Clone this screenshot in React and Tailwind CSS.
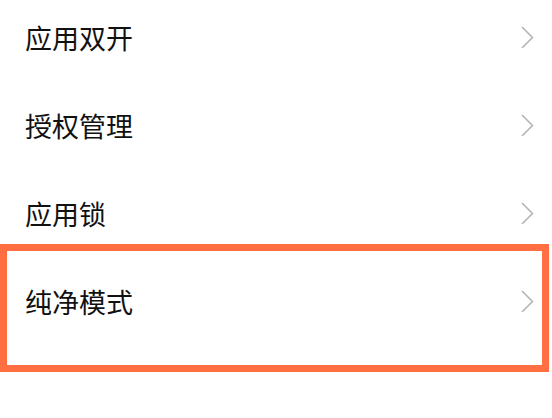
import React from 'react';

const items = ['应用双开', '授权管理', '应用锁', '纯净模式'];

const Chevron = () => (
  <svg width="13" height="23" viewBox="0 0 13 23" fill="none">
    <polyline
      points="1.5,1.5 11.5,11.5 1.5,21.5"
      stroke="#b4b4b4"
      strokeWidth="1.6"
      strokeLinecap="round"
      strokeLinejoin="round"
    />
  </svg>
);

export default function App() {
  return (
    <div
      className="relative w-[552px] h-[418px] bg-white overflow-hidden"
      style={{ fontFamily: '"Noto Sans CJK SC", "Noto Sans", sans-serif' }}
    >
      <div className="flex flex-col gap-[13px]">
        {items.map((label) => (
          <div key={label} className="h-[75px] flex items-center justify-between pl-[25px] pr-[18px]">
            <span className="text-[27px] leading-none text-[#111111]">{label}</span>
            <Chevron />
          </div>
        ))}
      </div>

      {/* highlight frame */}
      <div className="absolute left-0 top-[244px] w-[549px] h-[128px] border-[7px] border-[#ff6f42]"></div>
    </div>
  );
}
